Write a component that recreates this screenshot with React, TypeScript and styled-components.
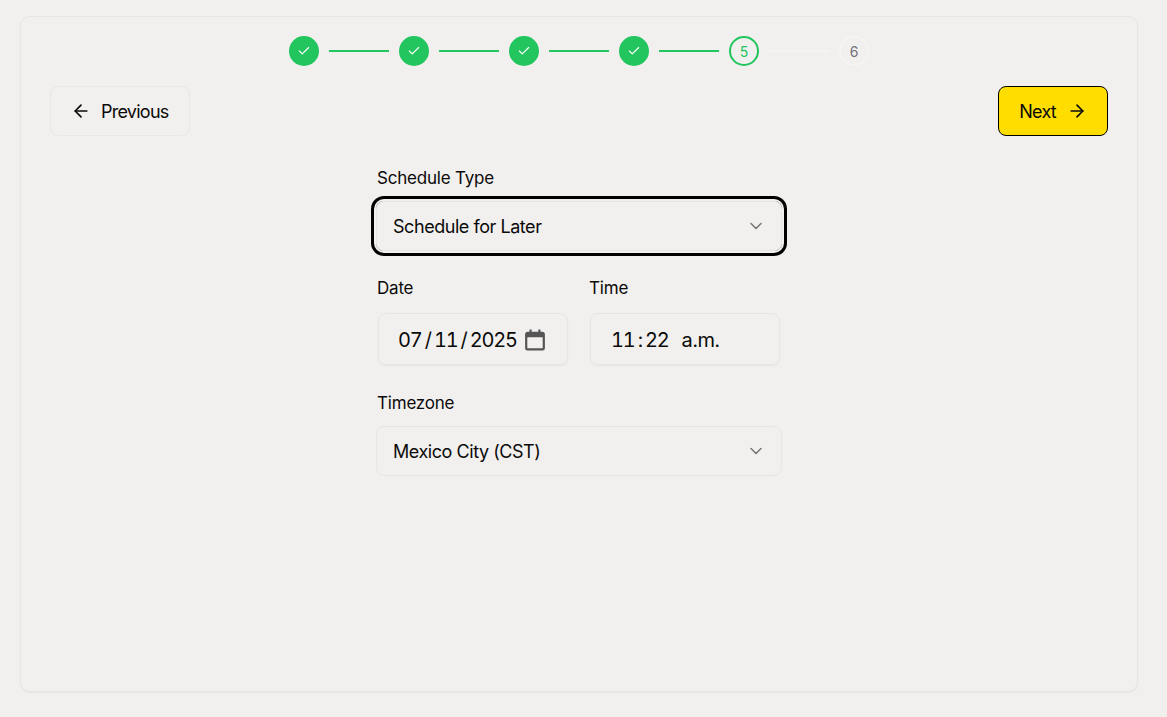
import React from "react";
import styled, { createGlobalStyle } from "styled-components";
import { ArrowLeft, ArrowRight, Check, ChevronDown } from "lucide-react";

const Global = createGlobalStyle`
  html, body { margin: 0; padding: 0; height: 100%; background: #f2f0ee; }
  body { font-family: Inter, "Liberation Sans", sans-serif; color: #0a0a0a; }
`;
const Page = styled.div`
  box-sizing: border-box;
  width: 1167px;
  height: 717px;
  padding: 16px 29px 25px 20px;
  overflow: hidden;
`;
const Card = styled.main`
  box-sizing: border-box;
  height: 676px;
  padding: 19px 29px 0;
  border: 1px solid #e8e6e4;
  border-radius: 10px;
  box-shadow: 0 1px 2px rgba(0, 0, 0, 0.05);
`;
const Stepper = styled.ol`
  list-style: none;
  margin: 0;
  padding: 0;
  height: 30px;
  display: flex;
  justify-content: center;
  align-items: center;
  gap: 10px;
`;
const Step = styled.li<{ $state: "done" | "active" | "todo" }>`
  box-sizing: border-box;
  width: 30px;
  height: 30px;
  border-radius: 50%;
  display: flex;
  align-items: center;
  justify-content: center;
  font-size: 14px;
  background: ${(p) => (p.$state === "done" ? "#22c55e" : "transparent")};
  border: 2px solid ${(p) => (p.$state === "todo" ? "#f5f4f2" : "#22c55e")};
  color: ${(p) => (p.$state === "done" ? "#fff" : p.$state === "active" ? "#22c55e" : "#71717a")};
`;
const Line = styled.li<{ $on: boolean }>`
  width: 60px;
  height: 2px;
  background: ${(p) => (p.$on ? "#22c55e" : "#f5f4f2")};
`;
const Nav = styled.nav`
  display: flex;
  justify-content: space-between;
  margin-top: 20px;
`;
const Button = styled.button<{ $primary?: boolean }>`
  box-sizing: border-box;
  height: 50px;
  padding: 0 20px;
  display: flex;
  align-items: center;
  gap: ${(p) => (p.$primary ? "11px" : "10px")};
  border-radius: 8px;
  font: 400 18px Inter, "Liberation Sans", sans-serif;
  letter-spacing: -0.75px;
  color: #0a0a0a;
  background: ${(p) => (p.$primary ? "#ffdd00" : "transparent")};
  border: 1px solid ${(p) => (p.$primary ? "#000" : "#e9e7e5")};
`;
const Form = styled.form`
  width: 406px;
  margin: 30px auto 0;
  display: flex;
  flex-direction: column;
`;
const Label = styled.label`
  display: block;
  font-size: 17px;
  line-height: 24px;
  letter-spacing: -0.2px;
  padding-left: 1px;
  margin-bottom: 11px;
`;
const Select = styled.div<{ $focused?: boolean }>`
  box-sizing: border-box;
  height: 50px;
  padding: 0 15px 0 16px;
  display: flex;
  align-items: center;
  justify-content: space-between;
  font-size: 18px;
  letter-spacing: -0.45px;
  border-radius: 8px;
  border: 1px solid #e8e6e4;
  box-shadow: ${(p) => (p.$focused ? "0 0 0 2px #f2f0ee, 0 0 0 5px #000" : "none")};
  svg { color: #737373; }
`;
const Row = styled.div`
  display: flex;
  gap: 22px;
  margin-top: 25px;
  padding: 0 2px;
`;
const Field = styled.div`
  width: 190px;
  & > label { margin-left: -2px; margin-bottom: 13px; }
`;
const DateBox = styled.div<{ $inset: number }>`
  box-sizing: border-box;
  height: 52px;
  padding: 1px 0 0 ${(p) => p.$inset}px;
  display: flex;
  align-items: center;
  gap: 7px;
  font-size: 20px;
  font-variant-numeric: tabular-nums;
  letter-spacing: -1.2px;
  word-spacing: -1px;
  border-radius: 8px;
  border: 1px solid #e8e6e4;
  box-shadow: 0 1px 2px rgba(0, 0, 0, 0.05);
  white-space: pre;
`;
const Meridiem = styled.span`
  margin-left: 6px;
  letter-spacing: -0.4px;
`;
const Zone = styled.div`
  margin-top: 26px;
`;

const steps = [1, 2, 3, 4, 5, 6];

export default function App() {
  return (
    <Page>
      <Global />
      <Card>
        <Stepper>
          {steps.map((n) => (
            <React.Fragment key={n}>
              <Step $state={n < 5 ? "done" : n === 5 ? "active" : "todo"}>
                {n < 5 ? <Check size={14} strokeWidth={2} /> : n}
              </Step>
              {n < 6 && <Line $on={n < 5} />}
            </React.Fragment>
          ))}
        </Stepper>
        <Nav>
          <Button type="button">
            <ArrowLeft size={20} strokeWidth={2} />
            Previous
          </Button>
          <Button type="button" $primary>
            Next
            <ArrowRight size={20} strokeWidth={2} />
          </Button>
        </Nav>
        <Form>
          <Label>Schedule Type</Label>
          <Select $focused>
            Schedule for Later
            <ChevronDown size={20} strokeWidth={1.75} />
          </Select>
          <Row>
            <Field>
              <Label>Date</Label>
              <DateBox $inset={19}>
                07 / 11 / 2025
                <svg width="22" height="22" viewBox="0 0 20 20" fill="none">
                  <path d="M5 0.5h2v2h6v-2h2v2h1.5A2.5 2.5 0 0 1 19 5v12.5a2 2 0 0 1-2 2H3a2 2 0 0 1-2-2V5a2.5 2.5 0 0 1 2.5-2.5H5z" fill="#555" />
                  <rect x="3" y="7.5" width="14" height="10" rx="0.5" fill="#f2f0ee" />
                </svg>
              </DateBox>
            </Field>
            <Field>
              <Label>Time</Label>
              <DateBox $inset={20}>
                11 : 22
                <Meridiem>a.m.</Meridiem>
              </DateBox>
            </Field>
          </Row>
          <Zone>
            <Label>Timezone</Label>
            <Select>
              Mexico City (CST)
              <ChevronDown size={20} strokeWidth={1.75} />
            </Select>
          </Zone>
        </Form>
      </Card>
    </Page>
  );
}
